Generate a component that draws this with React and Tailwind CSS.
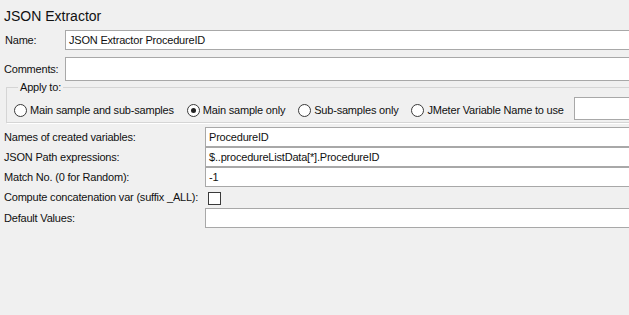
import React from 'react'

const font = { fontFamily: '"Liberation Sans", Arial, sans-serif' }

function Radio({ checked, label }) {
  return (
    <label className="flex items-center gap-[3px] whitespace-nowrap">
      <span className="w-[13px] h-[13px] rounded-full border border-[#3a3a3a] bg-white flex items-center justify-center shrink-0">
        {checked && <span className="w-[5px] h-[5px] rounded-full bg-[#222]" />}
      </span>
      <span>{label}</span>
    </label>
  )
}

function Field({ value = '', className = '' }) {
  return (
    <div className={`bg-white border border-[#a8a8a8] -mr-[6px] flex items-center pl-[3px] ${className}`}>
      {value}
    </div>
  )
}

export default function App() {
  const rows = [
    { label: 'Names of created variables:', value: 'ProcedureID' },
    { label: 'JSON Path expressions:', value: '$..procedureListData[*].ProcedureID' },
    { label: 'Match No. (0 for Random):', value: '-1' },
  ]

  return (
    <div
      style={font}
      className="w-[629px] h-[315px] bg-[#f0f0f0] overflow-hidden text-[11px] tracking-[-0.2px] text-[#111]"
    >
      {/* Title */}
      <div className="h-[30px] pl-[4px] pt-[7px] text-[14px] tracking-normal leading-[18px]">
        JSON Extractor
      </div>

      {/* Name */}
      <div className="flex items-center pl-[5px]">
        <div className="w-[60px]">Name:</div>
        <Field value="JSON Extractor ProcedureID" className="flex-1 h-[20px]" />
      </div>

      {/* Comments */}
      <div className="flex items-center pl-[4px] mt-[7px]">
        <div className="w-[61px] pt-[1px]">Comments:</div>
        <Field className="flex-1 h-[24px]" />
      </div>

      {/* Apply to */}
      <fieldset className="ml-[6px] -mr-[6px] border border-[#d5d5d5] shadow-[1px_1px_0_#fff] pl-[7px] pb-[2px]">
        <legend className="ml-[4px] px-[2px] leading-[12px] h-[12px]">Apply to:</legend>
        <div className="flex items-center h-[23px] mt-[4px]">
          <div className="flex items-center gap-[13px] pt-[3px]">
            <Radio label="Main sample and sub-samples" />
            <Radio checked label="Main sample only" />
            <Radio label="Sub-samples only" />
            <Radio label="JMeter Variable Name to use" />
          </div>
          <div className="ml-[10px] flex-1 h-[23px] bg-white border border-[#a8a8a8]" />
        </div>
      </fieldset>

      {/* Extraction settings */}
      <div className="mt-[4px] grid grid-cols-[201px_1fr] pl-[4px]">
        {rows.map(r => (
          <React.Fragment key={r.label}>
            <div className="h-[20px] flex items-center">{r.label}</div>
            <Field value={r.value} className="h-[20px]" />
          </React.Fragment>
        ))}
        <div className="h-[21px] flex items-center">Compute concatenation var (suffix _ALL):</div>
        <div className="h-[21px] flex items-center pl-[3px] pt-[2px]">
          <span className="w-[13px] h-[13px] border border-[#3a3a3a] bg-white" />
        </div>
        <div className="h-[20px] flex items-center">Default Values:</div>
        <Field className="h-[20px]" />
      </div>
    </div>
  )
}
